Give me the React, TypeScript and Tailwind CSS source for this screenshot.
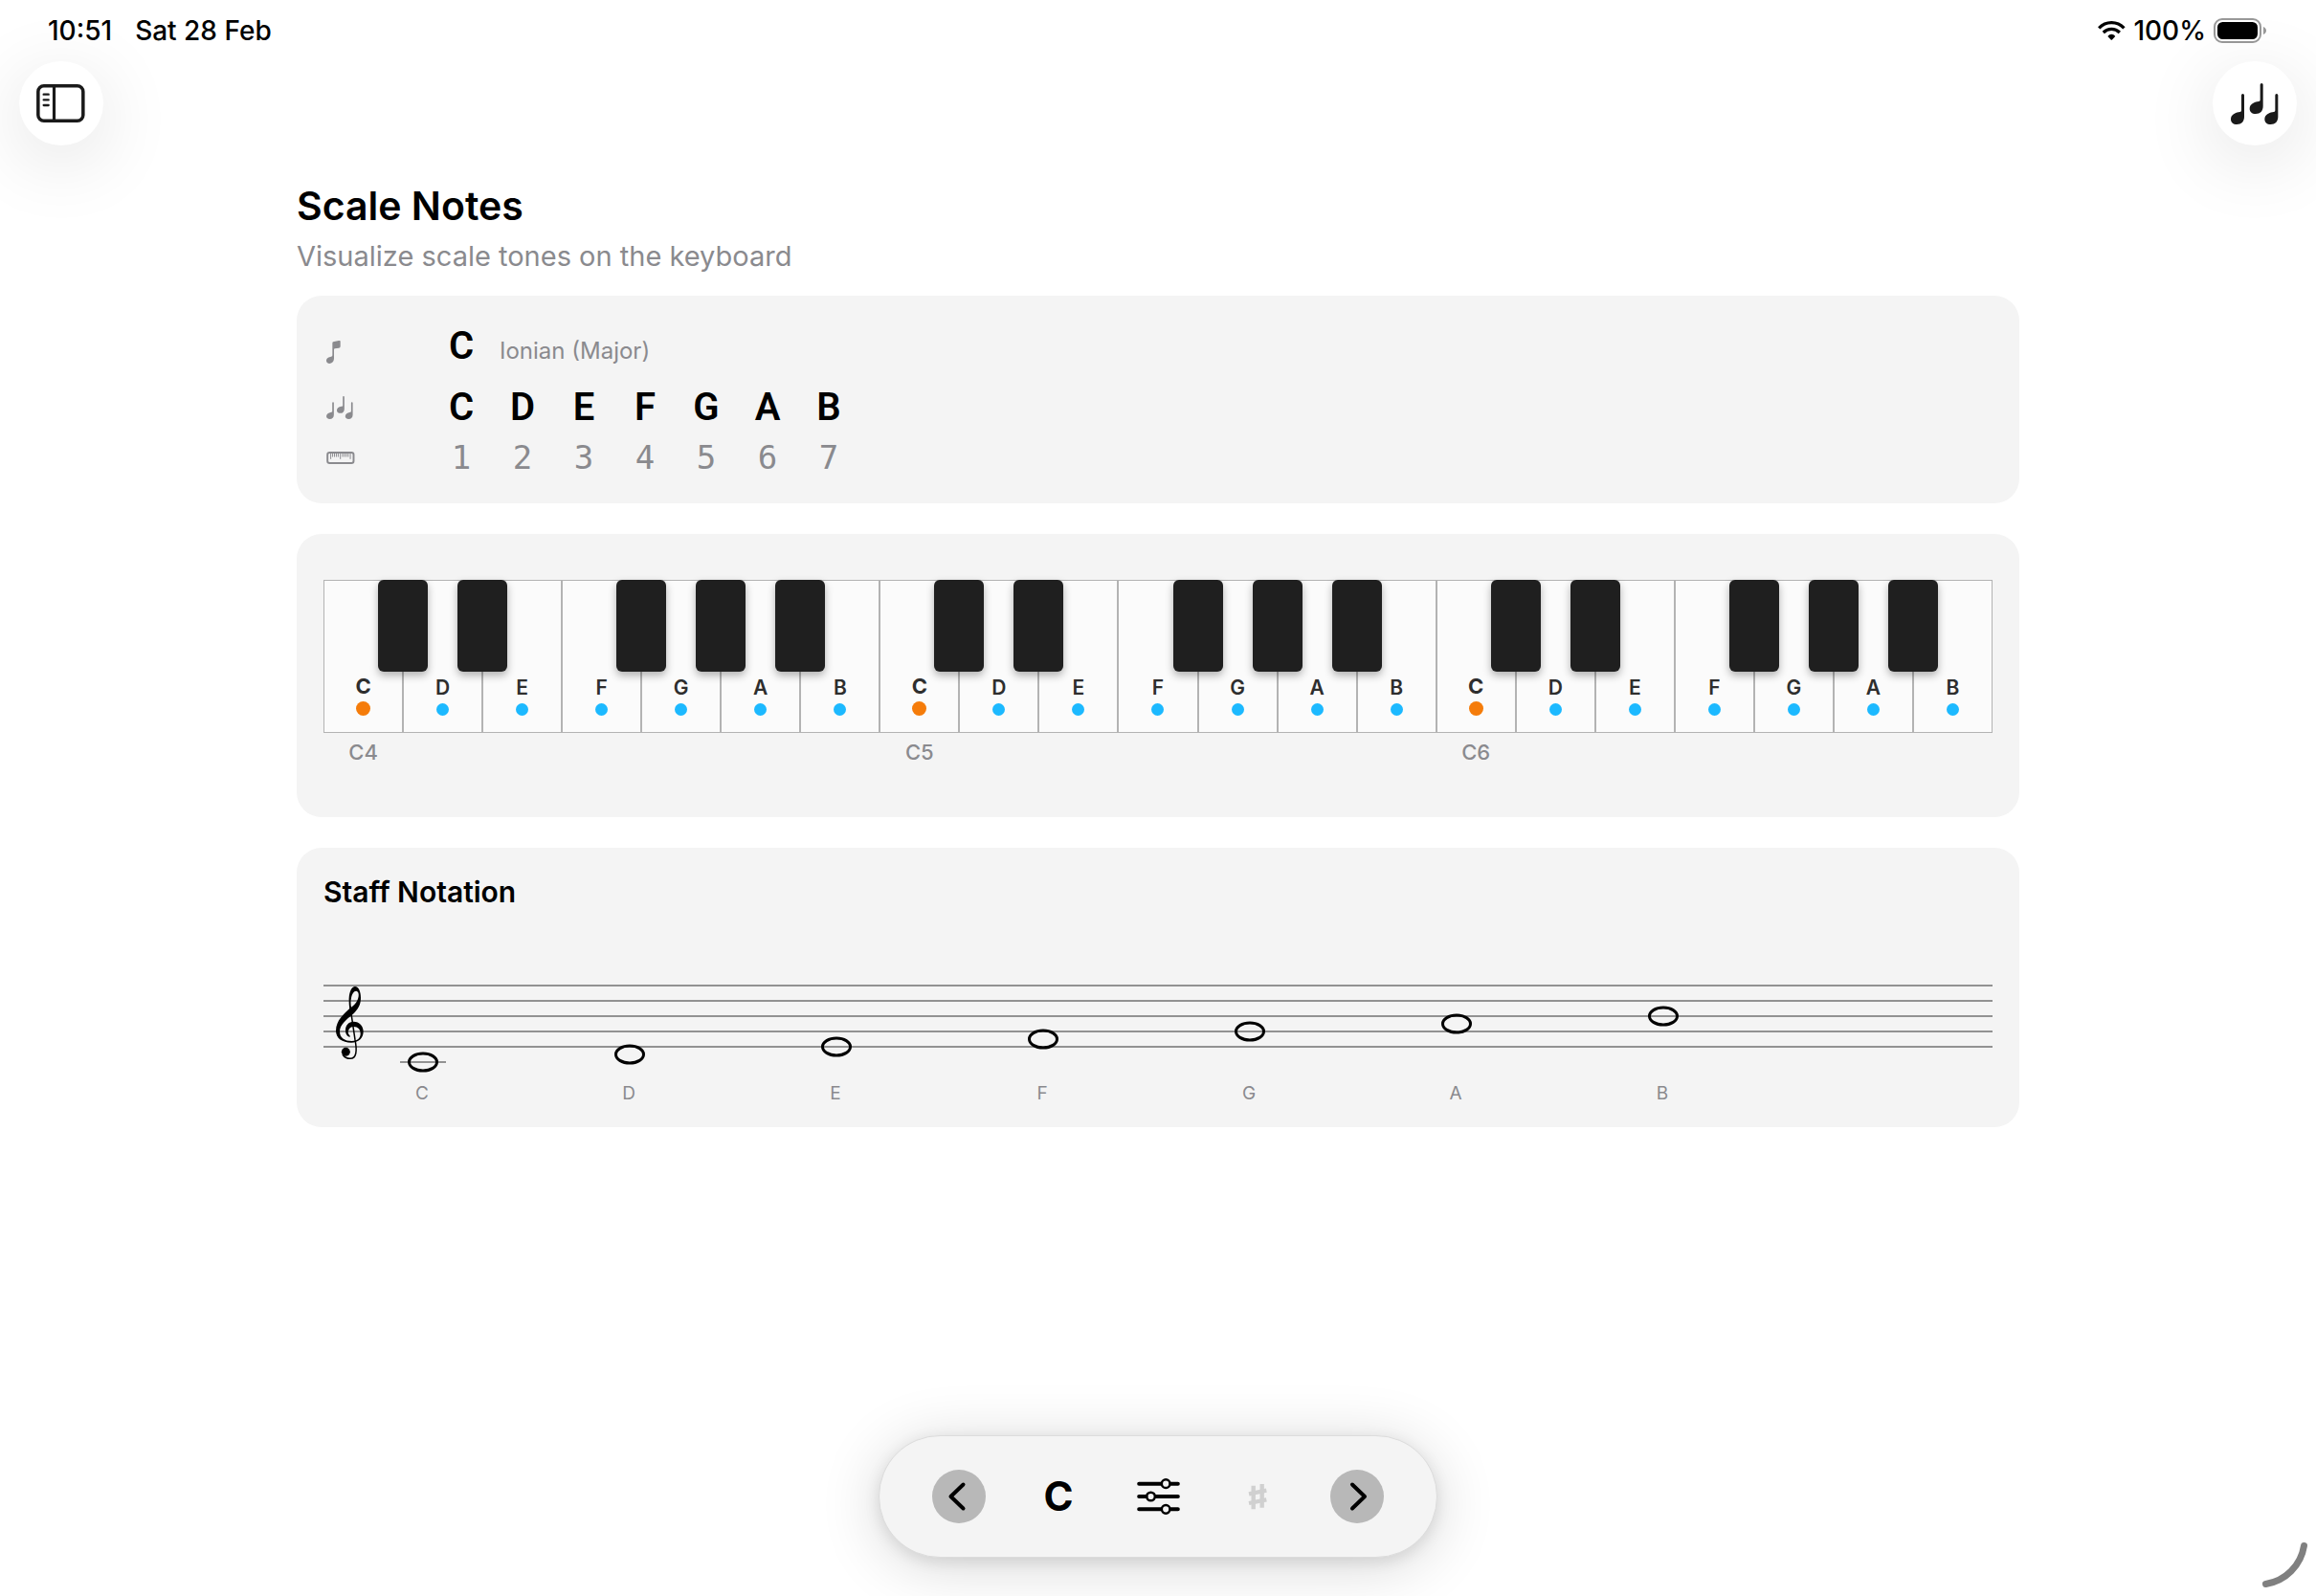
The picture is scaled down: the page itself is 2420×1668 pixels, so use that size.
const SCALE = ["C", "D", "E", "F", "G", "A", "B"];
const OCTAVES = [4, 5, 6];
const HAS_SHARP = ["C", "D", "F", "G", "A"];

const SidebarIcon = () => (
  <svg viewBox="114 264 156 120" className="w-[52px] h-10" fill="none" stroke="#1a1a1a" aria-hidden="true">
    <rect x="119.5" y="269.5" width="141" height="109" rx="18" strokeWidth="10.5" />
    <path d="M169.5 270v108" strokeWidth="9.5" />
    <path d="M137 296h15M137 313h15M137 330h15" strokeWidth="7" strokeLinecap="round" />
  </svg>
);

const NOTE = "M33 4.5a4.5 4.5 0 0 1 9 0V72C42 87 33 96 19 96C7 96 0 89 0 80C0 66 13 60 24 58C31 57 33 56 33 52Z";

const NotesIcon = ({ className }: { className: string }) => (
  <svg viewBox="0 0 150 129" className={className} fill="currentColor" aria-hidden="true">
    <path d={NOTE} transform="translate(0 33)" />
    <path d={NOTE} transform="translate(59 0)" />
    <path d={NOTE} transform="translate(106 33)" />
  </svg>
);

const EighthNoteIcon = () => (
  <svg viewBox="33 9 60 108" className="w-5 h-9" fill="currentColor" aria-hidden="true">
    <path d="M57 73V100C57 111 50 117 43 117C37 117 33 113 33 108C33 99 41 96 48 95C51 94 52 93 52 90V54C52 50 53 49 57 48L72 45C76 44 77 45 77 48V62C77 66 75 67 72 68L60 70C58 70 57 71 57 73Z" />
  </svg>
);

const RulerIcon = () => (
  <svg viewBox="33 395 90 40" className="w-[30px] h-[13px]" fill="none" stroke="currentColor" aria-hidden="true">
    <rect x="35.5" y="398" width="84" height="34" rx="7" strokeWidth="6" />
    <path d="M46 400v19M77 400v19M109 400v19" strokeWidth="3" />
    <path d="M52 400v12M58 400v12M64 400v12M70 400v12M84 400v12M90 400v12M96 400v12M102 400v12" strokeWidth="3" />
  </svg>
);

const WifiIcon = () => (
  <svg viewBox="215 66 87 61" className="w-[29px] h-5" fill="none" stroke="black" aria-hidden="true">
    <path d="M218 88.500C240 65.500 276 65.500 298 88.500" strokeWidth="10" />
    <path d="M232 102.500C247 88 269 88 284 102.500" strokeWidth="10" />
    <path d="M246 115C253 106 263 106 270 115L260 125.500Q258 127 256 125.500Z" fill="black" stroke="none" />
  </svg>
);

const BatteryIcon = () => (
  <svg viewBox="0 0 56 26" className="w-14 h-[26px]" aria-hidden="true">
    <rect x="1" y="1" width="48" height="24" rx="8" fill="none" stroke="#999" strokeWidth="2" />
    <rect x="4" y="4" width="42" height="18" rx="5.500" fill="black" />
    <path d="M52 9C56 10.500 56 15.500 52 17Z" fill="#999" />
  </svg>
);

const SlidersIcon = () => (
  <svg viewBox="0 0 134 114" className="w-[45px] h-[38px]" fill="none" stroke="black" aria-hidden="true">
    <path d="M6 17h68M106 17h22M6 57h22M60 57h68M6 97h68M106 97h22" strokeWidth="12" strokeLinecap="round" />
    <circle cx="90" cy="17" r="13" strokeWidth="7.500" />
    <circle cx="43" cy="57" r="13" strokeWidth="7.500" />
    <circle cx="90" cy="97" r="13" strokeWidth="7.500" />
  </svg>
);

const SharpIcon = () => (
  <svg viewBox="132 174 60 84" className="w-5 h-7" fill="none" stroke="#d0d0d0" strokeWidth="13" strokeLinejoin="round" aria-hidden="true">
    <path d="M149 182V256M176 177V251" />
    <path d="M135 208L190 197M135 237L190 226" />
  </svg>
);

const Chevron = ({ d }: { d: string }) => (
  <svg viewBox="0 0 56 56" className="w-14 h-14" fill="none" stroke="black" strokeWidth="4" strokeLinecap="round" strokeLinejoin="round" aria-hidden="true">
    <path d={d} />
  </svg>
);

const StatusBar = () => (
  <div className="flex items-center justify-between h-16 pl-[50px] pr-[51px] text-[28px] font-medium">
    <div className="flex gap-6">
      <span>10:51</span>
      <span>Sat 28 Feb</span>
    </div>
    <div className="flex items-center gap-2">
      <WifiIcon />
      <span>100%</span>
      <BatteryIcon />
    </div>
  </div>
);

const ScaleCard = () => (
  <section className="rounded-[26px] bg-[#f4f4f4] px-7 pt-[29px] pb-7">
    {/* Root and mode */}
    <div className="flex items-center h-12">
      <div className="w-28 pl-[3px] text-[#8a8a8e]">
        <EighthNoteIcon />
      </div>
      <div className="flex items-baseline">
        <span className="w-16 text-center font-[Roboto] font-semibold text-[40px] leading-[48px]">C</span>
        <span className="ml-2 text-[24px] text-[#8a8a8e]">Ionian (Major)</span>
      </div>
    </div>

    {/* Scale tones */}
    <div className="flex items-center h-12 mt-4">
      <div className="w-28 pl-[3px] text-[#8a8a8e]">
        <NotesIcon className="w-7 h-6" />
      </div>
      {SCALE.map((note) => (
        <span key={note} className="w-16 text-center font-[Roboto] font-semibold text-[40px] leading-[48px]">
          {note}
        </span>
      ))}
    </div>

    {/* Degrees */}
    <div className="flex items-center h-10 mt-2 text-[#8a8a8e]">
      <div className="w-28 pl-[3px]">
        <RulerIcon />
      </div>
      {SCALE.map((note, i) => (
        <span key={note} className="w-16 text-center font-['DejaVu_Sans_Mono',monospace] text-[34px] leading-10">
          {i + 1}
        </span>
      ))}
    </div>
  </section>
);

const Keyboard = () => (
  <section className="rounded-[26px] bg-[#f4f4f4] px-7 pt-12 pb-[54px]">
    <div className="flex">
      {OCTAVES.map((octave) => (
        <div key={octave} className="flex-1">
          <div className="flex h-40">
            {SCALE.map((note) => (
              <div key={note} className="relative flex flex-1 flex-col items-center justify-end gap-1 border border-[#b3b3b3] bg-[#fbfbfb] pb-[17px] text-[#2e2e2e]">
                {note === "C" ? (
                  <>
                    <span className="text-[22px] leading-6 font-bold">{note}</span>
                    <span className="size-[15px] rounded-full bg-[#f57c0a]"></span>
                  </>
                ) : (
                  <>
                    <span className="text-[21px] leading-6 font-semibold">{note}</span>
                    <span className="size-[13px] rounded-full bg-[#1cb9ff]"></span>
                  </>
                )}
                {HAS_SHARP.includes(note) && (
                  <div className="absolute z-10 -top-px -right-px h-24 w-[52px] translate-x-1/2 rounded-md bg-[#1f1f1f] shadow-[0_4px_8px_rgba(0,0,0,0.3)]"></div>
                )}
              </div>
            ))}
          </div>
          <div className="mt-[6px] w-1/7 text-center text-[22px] leading-7 font-medium text-[#8a8a8e]">C{octave}</div>
        </div>
      ))}
    </div>
  </section>
);

const Clef = () => (
  <g transform="translate(-2 54) scale(0.3333)">
    <path
      fillRule="evenodd"
      d="M104 33C92 35 85 55 86 80C86 88 87 96 88 102C72 118 45 138 45 172C45 196 65 209 93 209C116 209 131 195 131 174C131 156 118 143 101 143C84 143 75 156 75 170C75 182 81 190 88 191C90 191 90 189 88 187C84 182 82 178 84 172C86 163 93 159 101 159C114 159 122 168 122 181C122 196 112 204 95 204C72 204 57 194 57 174C57 152 78 137 99 119C114 104 123 92 123 68C123 48 116 32 104 33ZM109 47C117 49 118 60 114 72C110 84 102 91 93 98C91 88 91 78 93 69C95 57 102 46 109 47Z"
    />
    <path d="M90 98L105 200C112 236 109 259 90 259C80 259 71 254 66 246" fill="none" stroke="black" strokeWidth="4.500" />
    <circle cx="76" cy="238" r="13.500" />
  </g>
);

const StaffCard = () => (
  <section className="rounded-[26px] bg-[#f4f4f4] px-7 pt-7 pb-5">
    <h2 className="text-[30px] leading-9 font-semibold">Staff Notation</h2>
    <svg viewBox="0 0 1744 192" className="mt-4 w-full h-auto overflow-visible" role="img" aria-label="Staff Notation">
      {[64, 80, 96, 112, 128].map((y) => (
        <path key={y} d={`M0 ${y}H1744`} stroke="#929292" strokeWidth="2" />
      ))}
      <Clef />
      <path d="M80 144h48" stroke="#929292" strokeWidth="2" />
      {SCALE.map((note, i) => (
        <g key={note}>
          <ellipse cx={104 + i * 216} cy={144 - i * 8} rx="14.500" ry="9" fill="none" stroke="black" strokeWidth="3" />
          <text x={103 + i * 216} y="183" textAnchor="middle" fill="#8a8a8e" fontSize="19">
            {note}
          </text>
        </g>
      ))}
    </svg>
  </section>
);

const Toolbar = () => (
  <div className="flex items-center gap-12 h-32 px-[55px] rounded-[64px] border border-[#dcdcdc] bg-[#f4f4f4] shadow-[0_8px_64px_rgba(0,0,0,0.16),0_4px_16px_rgba(0,0,0,0.1)]">
    <button aria-label="Previous" className="size-14 rounded-full bg-[#b8b8b8]">
      <Chevron d="M32.500 15.500L19.500 28L32.500 40.500" />
    </button>
    <button className="size-14 text-[42px] leading-[56px] font-bold">C</button>
    <button aria-label="Options" className="flex size-14 items-center justify-center">
      <SlidersIcon />
    </button>
    <button disabled aria-label="Sharp" className="flex size-14 items-center justify-center">
      <SharpIcon />
    </button>
    <button aria-label="Next" className="size-14 rounded-full bg-[#b8b8b8]">
      <Chevron d="M23 15.500L36 28L23 40.500" />
    </button>
  </div>
);

export default function App() {
  return (
    <div className="relative flex min-h-screen flex-col overflow-hidden bg-white font-[Inter,sans-serif] text-black">
      <StatusBar />
      <div className="flex justify-between px-5">
        <button aria-label="Toggle sidebar" className="flex size-[88px] items-center justify-center rounded-full bg-white shadow-[0_16px_80px_rgba(0,0,0,0.12)]">
          <SidebarIcon />
        </button>
        <button aria-label="Scale notes" className="flex size-[88px] items-center justify-center rounded-full bg-white text-[#1a1a1a] shadow-[0_16px_80px_rgba(0,0,0,0.12)]">
          <NotesIcon className="w-[50px] h-[43px]" />
        </button>
      </div>

      <main className="mx-auto w-full max-w-[1800px] pt-9">
        <h1 className="text-[41px] leading-[54px] font-semibold">Scale Notes</h1>
        <p className="mt-[6px] mb-[21px] text-[29px] leading-10 text-[#8a8a8e]">Visualize scale tones on the keyboard</p>
        <div className="flex flex-col gap-8">
          <ScaleCard />
          <Keyboard />
          <StaffCard />
        </div>
      </main>

      <footer className="mt-auto flex justify-center pb-10">
        <Toolbar />
      </footer>

      {/* Corner handle */}
      <svg viewBox="0 0 100 100" className="absolute right-0 bottom-0 size-[100px]" fill="none" aria-hidden="true">
        <path d="M87.500 47.500A48 48 0 0 1 47.500 87.500" stroke="#808080" strokeWidth="7" strokeLinecap="round" />
      </svg>
    </div>
  );
}
